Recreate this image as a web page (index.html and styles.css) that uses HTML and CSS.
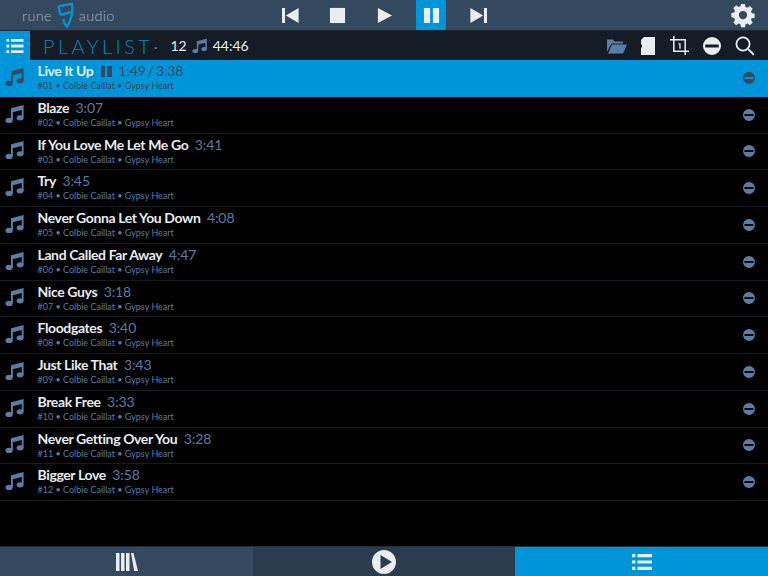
FILE: index.html
```html
<!DOCTYPE html>
<html lang="en">
<head>
    <meta charset="UTF-8">
    <meta name="viewport" content="width=device-width, initial-scale=1.0">
    <title>RuneAudio Playlist</title>
    <link rel="stylesheet" href="styles.css">
</head>
<body>
    <svg class="defs" width="0" height="0">
        <symbol id="note" viewBox="0 0 20 20">
            <path d="M6 4.200 18.600 1v12.600h-1.900V6L7.900 8.200v8h-1.900z"/>
            <ellipse cx="4.100" cy="16.400" rx="3.600" ry="2.600"/>
            <ellipse cx="15.100" cy="13.800" rx="3.500" ry="2.600"/>
        </symbol>
        <symbol id="minus" viewBox="0 0 20 20">
            <path fill-rule="evenodd" d="M10 0a10 10 0 1 0 0 20 10 10 0 0 0 0-20zM2.500 8.300h15v3.400h-15z"/>
        </symbol>
        <symbol id="list" viewBox="0 0 20 16">
            <path d="M0 0h3.400v3.200H0zM5.400 0H20v3.200H5.400zM0 6.400h3.400v3.200H0zM5.400 6.400H20v3.200H5.400zM0 12.800h3.400V16H0zM5.400 12.800H20V16H5.400z"/>
        </symbol>
    </svg>

    <header class="topbar">
        <div class="logo">
            <span>rune</span>
            <svg class="logo-mark" viewBox="0 0 17 26"><path d="M1.500 4.200 15 1.800c.9 6.200.2 14.800-5 23-2-2.300-3.300-5-3.900-7.800M3.800 13 13.600 10M1.500 4.200c.2 2.400.9 4.800 2.300 8.800"/></svg>
            <span>audio</span>
        </div>
        <nav class="transport">
            <button class="tbtn"><svg viewBox="0 0 18 18"><path d="M0 1h3.200v16H0zM17.600 1v16L4 9z"/></svg></button>
            <button class="tbtn"><svg viewBox="0 0 18 18"><path d="M1 1h16v16H1z"/></svg></button>
            <button class="tbtn"><svg viewBox="0 0 18 18"><path d="M2 1 17 9 2 17z"/></svg></button>
            <button class="tbtn active"><svg viewBox="0 0 18 18"><path d="M1 1h6.500v16H1zM10.500 1H17v16h-6.500z"/></svg></button>
            <button class="tbtn"><svg viewBox="0 0 18 18"><path d="M0.400 1v16L14 9zM14.800 1H18v16h-3.200z"/></svg></button>
        </nav>
        <svg class="gear" viewBox="0 0 24 24"><path fill-rule="evenodd" d="M9.800 0h4.400l.6 3.200 2 .8 2.700-1.900 3.100 3.100-1.900 2.700.8 2 3.200.6v4.400l-3.200.6-.8 2 1.900 2.700-3.100 3.100-2.700-1.900-2 .8-.6 3.200H9.800l-.6-3.200-2-.8-2.700 1.900-3.100-3.100 1.900-2.700-.8-2L-.7 14.200V9.800l3.200-.6.800-2-1.900-2.700 3.100-3.100 2.700 1.900 2-.8zM12 7.500a4.500 4.500 0 1 0 0 9 4.500 4.500 0 0 0 0-9z"/></svg>
    </header>

    <section class="subbar">
        <button class="menu-btn"><svg viewBox="0 0 20 16"><use href="#list"/></svg></button>
        <h1>PLAYLIST<span class="dot">·</span></h1>
        <div class="summary">
            <span>12</span>
            <svg class="summary-note"><use href="#note"/></svg>
            <span>44:46</span>
        </div>
        <div class="tools">
            <svg class="tool folder" viewBox="0 0 20 16"><path d="M0 14V1.500h6l1.500 2H16v2H4.500zM1 15.500 5 6.500h15l-4 9z"/></svg>
            <svg class="tool card" viewBox="0 0 14 18"><path d="M3 0h11v18H0v-7l1-1V8L0 7V3z"/></svg>
            <svg class="tool crop" viewBox="0 0 20 20"><path fill="none" stroke="currentColor" stroke-width="1.600" d="M4 0v16h16M0 4h16v16"/><path d="M9 7.500h2.200v6H9.800V9H9z"/></svg>
            <svg class="tool minus" viewBox="0 0 20 20"><use href="#minus"/></svg>
            <svg class="tool search" viewBox="0 0 20 20"><circle cx="8" cy="8" r="6.600" fill="none" stroke="currentColor" stroke-width="1.800"/><path d="m12.600 13.800 1.300-1.300 5.700 5.700-1.400 1.400z"/></svg>
        </div>
    </section>

    <ul id="playlist" class="playlist"></ul>

    <footer class="tabs">
        <button class="tab tab-library"><svg class="tab-books" viewBox="0 0 22 18"><path d="M0 0h3.500v18H0zM5 0h3.500v18H5zM10 0h3.500v18H10zM15 0h2.500L22 18h-3.800z"/></svg></button>
        <button class="tab tab-playback"><svg class="tab-play" viewBox="0 0 24 24"><path fill-rule="evenodd" d="M12 0a12 12 0 1 0 0 24 12 12 0 0 0 0-24zM8.500 5 20 12 8.500 19z"/></svg></button>
        <button class="tab tab-queue"><svg class="tab-list" viewBox="0 0 20 16"><use href="#list"/></svg></button>
    </footer>

    <script>
        // Playlist rows
        const tracks = [
            ["Live It Up", "3:38"],
            ["Blaze", "3:07"],
            ["If You Love Me Let Me Go", "3:41"],
            ["Try", "3:45"],
            ["Never Gonna Let You Down", "4:08"],
            ["Land Called Far Away", "4:47"],
            ["Nice Guys", "3:18"],
            ["Floodgates", "3:40"],
            ["Just Like That", "3:43"],
            ["Break Free", "3:33"],
            ["Never Getting Over You", "3:28"],
            ["Bigger Love", "3:58"]
        ];

        document.getElementById('playlist').innerHTML = tracks.map(function(track, i) {
            const num = String(i + 1).padStart(2, '0');
            const first = i === 0;
            const time = first
                ? '<span class="paused"></span><span class="time">1:49 / ' + track[1] + '</span>'
                : '<span class="time">' + track[1] + '</span>';
            return `
                <li class="track${first ? ' current' : ''}">
                    <svg class="track-note"><use href="#note"/></svg>
                    <div class="track-text">
                        <div class="track-title"><span class="name">${track[0]}</span>${time}</div>
                        <div class="track-meta">#${num} • Colbie Caillat • Gypsy Heart</div>
                    </div>
                    <svg class="track-remove"><use href="#minus"/></svg>
                </li>`;
        }).join('');
    </script>
</body>
</html>
```

FILE: styles.css
```css
* {
    box-sizing: border-box;
}
html, body {
    height: 100%;
}
body {
    font-family: Lato, "Liberation Sans", sans-serif;
    margin: 0;
    background-color: #000000;
    color: #e8edf2;
    display: flex;
    flex-direction: column;
    overflow: hidden;
}
button {
    border: none;
    padding: 0;
    background: none;
    color: inherit;
}
svg {
    fill: currentColor;
    display: block;
}
.defs {
    position: absolute;
}
.topbar {
    flex: none;
    height: 31px;
    display: grid;
    grid-template-columns: 1fr auto 1fr;
    align-items: center;
    background: #34495e;
    border-bottom: 1px solid #222f3d;
}
.logo {
    display: flex;
    align-items: center;
    padding-left: 22px;
    gap: 5px;
    font-size: 14.500px;
    font-weight: 300;
    letter-spacing: 0.300px;
    color: #a3b0bd;
}
.logo-mark {
    width: 17px;
    height: 26px;
    fill: none;
    stroke: #0095d8;
    stroke-width: 2.400;
}
.transport {
    display: flex;
    gap: 17px;
}
.tbtn {
    width: 30px;
    height: 30px;
    display: flex;
    align-items: center;
    justify-content: center;
}
.tbtn svg {
    width: 17px;
    height: 17px;
}
.tbtn.active {
    background: #0095d8;
}
.gear {
    width: 22px;
    height: 22px;
    justify-self: end;
    margin-right: 14px;
    overflow: visible;
}
.subbar {
    flex: none;
    height: 29px;
    display: flex;
    align-items: center;
    background: #151c25;
    box-shadow: 0 1px 3px rgba(0, 0, 0, 0.6);
}
.menu-btn {
    width: 30px;
    height: 29px;
    display: flex;
    align-items: center;
    justify-content: center;
    background: #0095d8;
}
.menu-btn svg {
    width: 18px;
    height: 14px;
}
.subbar h1 {
    margin: 0 0 0 13px;
    font-size: 20px;
    font-weight: 300;
    letter-spacing: 3.400px;
    color: #0a84bd;
}
.dot {
    color: #587ea6;
}
.summary {
    display: flex;
    align-items: center;
    gap: 5px;
    margin-left: 9px;
    font-size: 14px;
    font-weight: 400;
    color: #e8edf2;
}
.summary-note {
    width: 16px;
    height: 16px;
    fill: #587ea6;
}
.tools {
    margin-left: auto;
    margin-right: 13px;
    display: flex;
    align-items: center;
    gap: 14px;
}
.tool {
    height: 18px;
    width: 18px;
    color: #e8edf2;
}
.tool.folder {
    width: 20px;
    height: 16px;
    color: #587ea6;
}
.tool.card {
    width: 14px;
    height: 18px;
}
.tool.crop {
    width: 19px;
    height: 19px;
    margin-left: 1px;
}
.tool.search {
    width: 20px;
    height: 20px;
}
.playlist {
    list-style: none;
    margin: 0;
    padding: 0;
    flex: 1;
}
.track {
    height: 36.750px;
    display: flex;
    align-items: center;
    border-bottom: 1px solid #151c25;
    padding-right: 13px;
}
.track-note {
    flex: none;
    width: 20px;
    height: 20px;
    margin-left: 5px;
    margin-top: -2px;
    fill: #587ea6;
}
.track-text {
    flex: 1;
    margin-left: 12.500px;
    margin-top: -2.400px;
    min-width: 0;
}
.track-title {
    display: flex;
    align-items: baseline;
    font-size: 14px;
    line-height: 18px;
}
.name {
    font-weight: 700;
    letter-spacing: -0.380px;
    color: #e8edf2;
}
.time {
    margin-left: 6.500px;
    color: #587ea6;
    font-size: 14px;
    letter-spacing: -0.100px;
    word-spacing: -1.500px;
}
.track-meta {
    font-size: 9px;
    line-height: 11px;
    color: #587ea6;
}
.track-remove {
    flex: none;
    width: 12px;
    height: 12px;
    fill: #587ea6;
}
.track.current {
    background: #0095d8;
    border-bottom-color: #0095d8;
}
.track.current .track-note,
.track.current .track-remove {
    fill: #34495e;
}
.track.current .time,
.track.current .track-meta {
    color: #34495e;
}
.paused {
    align-self: center;
    width: 11px;
    height: 11px;
    margin-left: 8px;
    background: linear-gradient(90deg, #34495e 0 4px, transparent 4px 6px, #34495e 6px);
}
.track.current .time {
    margin-left: 6px;
}
.tabs {
    flex: none;
    height: 30px;
    display: grid;
    grid-template-columns: 253px 262px 253px;
    border-top: 1px solid #222f3d;
}
.tab {
    display: flex;
    align-items: center;
    justify-content: center;
}
.tab-library {
    background: #34495e;
}
.tab-playback {
    background: #2b3c4e;
}
.tab-queue {
    background: #0095d8;
}
.tab-books {
    width: 22px;
    height: 18px;
}
.tab-play {
    width: 24px;
    height: 24px;
}
.tab-list {
    width: 20px;
    height: 16px;
}
```
